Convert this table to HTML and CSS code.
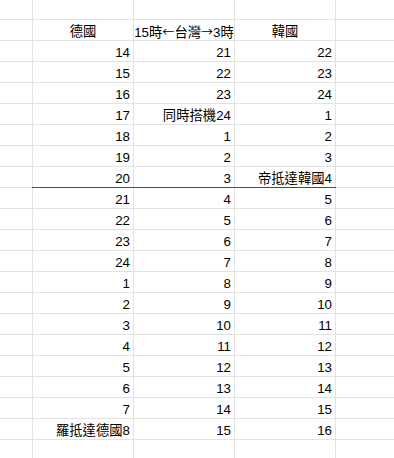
FILE: index.html
```html
<!DOCTYPE html>
<html lang="zh-Hant">
<head>
<meta charset="utf-8">
<title>Sheet</title>
<link rel="stylesheet" href="styles.css">
</head>
<body>
<div class="sheet">
  <div class="cell"></div><div class="cell"></div><div class="cell"></div><div class="cell"></div><div class="cell"></div>

  <div class="cell"></div><div class="cell c">德國</div><div class="cell c"><span>15時<span class="arr">←</span>台灣<span class="arr">→</span>3時</span></div><div class="cell c">韓國</div><div class="cell"></div>

  <div class="cell"></div><div class="cell">14</div><div class="cell">21</div><div class="cell">22</div><div class="cell"></div>
  <div class="cell"></div><div class="cell">15</div><div class="cell">22</div><div class="cell">23</div><div class="cell"></div>
  <div class="cell"></div><div class="cell">16</div><div class="cell">23</div><div class="cell">24</div><div class="cell"></div>
  <div class="cell"></div><div class="cell">17</div><div class="cell">同時搭機24</div><div class="cell">1</div><div class="cell"></div>
  <div class="cell"></div><div class="cell">18</div><div class="cell">1</div><div class="cell">2</div><div class="cell"></div>
  <div class="cell"></div><div class="cell">19</div><div class="cell">2</div><div class="cell">3</div><div class="cell"></div>
  <div class="cell"></div><div class="cell bb">20</div><div class="cell bb">3</div><div class="cell bb">帝抵達韓國4</div><div class="cell"></div>
  <div class="cell"></div><div class="cell">21</div><div class="cell">4</div><div class="cell">5</div><div class="cell"></div>
  <div class="cell"></div><div class="cell">22</div><div class="cell">5</div><div class="cell">6</div><div class="cell"></div>
  <div class="cell"></div><div class="cell">23</div><div class="cell">6</div><div class="cell">7</div><div class="cell"></div>
  <div class="cell"></div><div class="cell">24</div><div class="cell">7</div><div class="cell">8</div><div class="cell"></div>
  <div class="cell"></div><div class="cell">1</div><div class="cell">8</div><div class="cell">9</div><div class="cell"></div>
  <div class="cell"></div><div class="cell">2</div><div class="cell">9</div><div class="cell">10</div><div class="cell"></div>
  <div class="cell"></div><div class="cell">3</div><div class="cell">10</div><div class="cell">11</div><div class="cell"></div>
  <div class="cell"></div><div class="cell">4</div><div class="cell">11</div><div class="cell">12</div><div class="cell"></div>
  <div class="cell"></div><div class="cell">5</div><div class="cell">12</div><div class="cell">13</div><div class="cell"></div>
  <div class="cell"></div><div class="cell">6</div><div class="cell">13</div><div class="cell">14</div><div class="cell"></div>
  <div class="cell"></div><div class="cell">7</div><div class="cell">14</div><div class="cell">15</div><div class="cell"></div>
  <div class="cell"></div><div class="cell">羅抵達德國8</div><div class="cell">15</div><div class="cell">16</div><div class="cell"></div>

  <div class="cell"></div><div class="cell"></div><div class="cell"></div><div class="cell"></div><div class="cell"></div>
</div>
</body>
</html>
```

FILE: styles.css
```css
html, body {
  margin: 0;
  padding: 0;
  background: #ffffff;
  overflow: hidden;
}

.sheet {
  display: grid;
  grid-template-columns: 32px 100px 100px 100px 1fr;
  grid-template-rows: 19px repeat(21, 20px);
  gap: 1px;
  background: #e2e2e2;
  width: 394px;
  font-family: "Liberation Sans", Arial, "Noto Sans CJK TC", sans-serif;
  font-size: 13.33px;
  color: #000000;
}

.cell {
  background: #ffffff;
  padding: 2px 3px 0;
  line-height: 19px;
  white-space: nowrap;
  text-align: right;
  box-sizing: border-box;
  min-width: 0;
}

.c {
  display: flex;
  justify-content: center;
  text-align: center;
}

.arr {
  font-family: "Noto Sans CJK TC", sans-serif;
  font-size: 12px;
}

.bb {
  position: relative;
}

.bb::after {
  content: "";
  position: absolute;
  left: -1px;
  right: -1px;
  bottom: -1px;
  height: 1px;
  background: #9900ff;
}
```
